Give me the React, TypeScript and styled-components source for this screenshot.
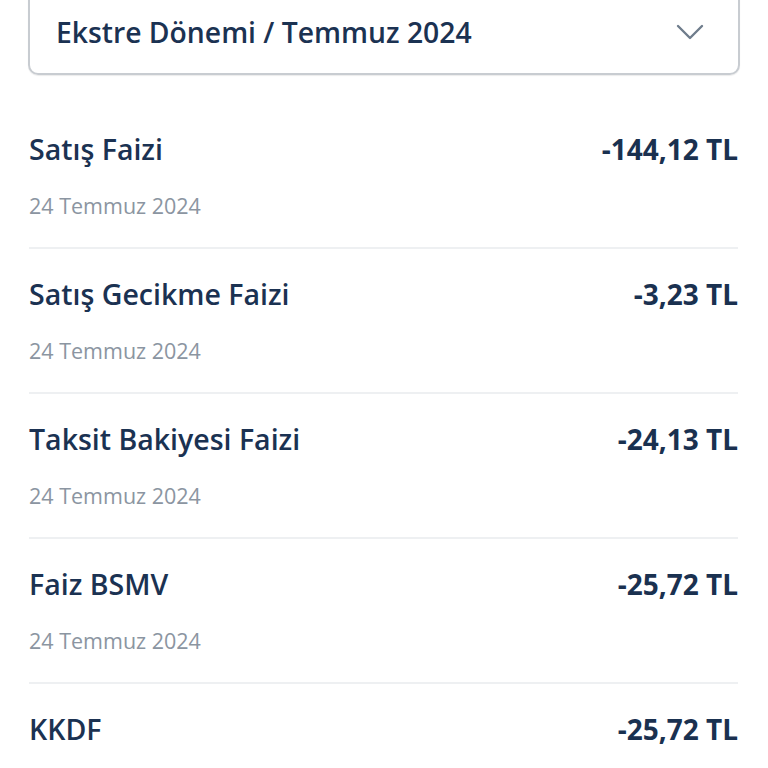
import styled, { createGlobalStyle } from 'styled-components'

const GlobalStyle = createGlobalStyle`
  html, body {
    margin: 0;
    padding: 0;
    background: #ffffff;
    font-family: 'Open Sans', 'Noto Sans', sans-serif;
  }
`

const Page = styled.div`
  display: flex;
  flex-direction: column;
  padding: 0 28px 0 29px;
  overflow: hidden;
  height: 768px;
  box-sizing: border-box;
`

const Select = styled.div`
  display: flex;
  align-items: center;
  justify-content: space-between;
  height: 87px;
  margin-top: -12px;
  margin-left: -1px;
  padding: 0 34px 0 26px;
  border: 2px solid #c8ccd1;
  border-radius: 10px;
  box-shadow: 0 1px 1px rgba(0, 0, 0, 0.08);
  box-sizing: border-box;
  flex-shrink: 0;
`

const SelectLabel = styled.span`
  font-size: 28.3px;
  font-weight: 600;
  color: #1b3252;
`

const List = styled.div`
  display: flex;
  flex-direction: column;
  margin-top: 29px;
  margin-right: 2px;
`

const Row = styled.div`
  display: flex;
  flex-direction: column;
  gap: 26px;
  padding: 28px 0 27px;
  border-bottom: 2px solid #eef0f2;
  flex-shrink: 0;
`

const Line = styled.div`
  display: flex;
  align-items: center;
  justify-content: space-between;
  height: 34px;
`

const Title = styled.span`
  font-size: 28.5px;
  line-height: 34px;
  font-weight: 600;
  color: #1b3252;
`

const Amount = styled.span`
  font-size: 28px;
  line-height: 34px;
  font-weight: 700;
  color: #1a3150;
`

const DateText = styled.span`
  font-size: 21.5px;
  line-height: 28px;
  color: #8b95a1;
`

const Chevron = () => (
  <svg width="28" height="16" viewBox="0 0 28 16" fill="none">
    <path
      d="M2 2l12 12L26 2"
      stroke="#6f7d8c"
      strokeWidth="2.4"
      strokeLinecap="round"
      strokeLinejoin="round"
    />
  </svg>
)

// last row's date sits below the fold, so it is left out
const items = [
  { title: 'Satış Faizi', amount: '-144,12 TL', date: '24 Temmuz 2024' },
  { title: 'Satış Gecikme Faizi', amount: '-3,23 TL', date: '24 Temmuz 2024' },
  { title: 'Taksit Bakiyesi Faizi', amount: '-24,13 TL', date: '24 Temmuz 2024' },
  { title: 'Faiz BSMV', amount: '-25,72 TL', date: '24 Temmuz 2024' },
  { title: 'KKDF', amount: '-25,72 TL' },
]

export default function App() {
  return (
    <>
      <GlobalStyle />
      <Page>
        <Select>
          <SelectLabel>Ekstre Dönemi / Temmuz 2024</SelectLabel>
          <Chevron />
        </Select>
        <List>
          {items.map((item, i) => (
            <Row key={i}>
              <Line>
                <Title>{item.title}</Title>
                <Amount>{item.amount}</Amount>
              </Line>
              {!!item.date && <DateText>{item.date}</DateText>}
            </Row>
          ))}
        </List>
      </Page>
    </>
  )
}
